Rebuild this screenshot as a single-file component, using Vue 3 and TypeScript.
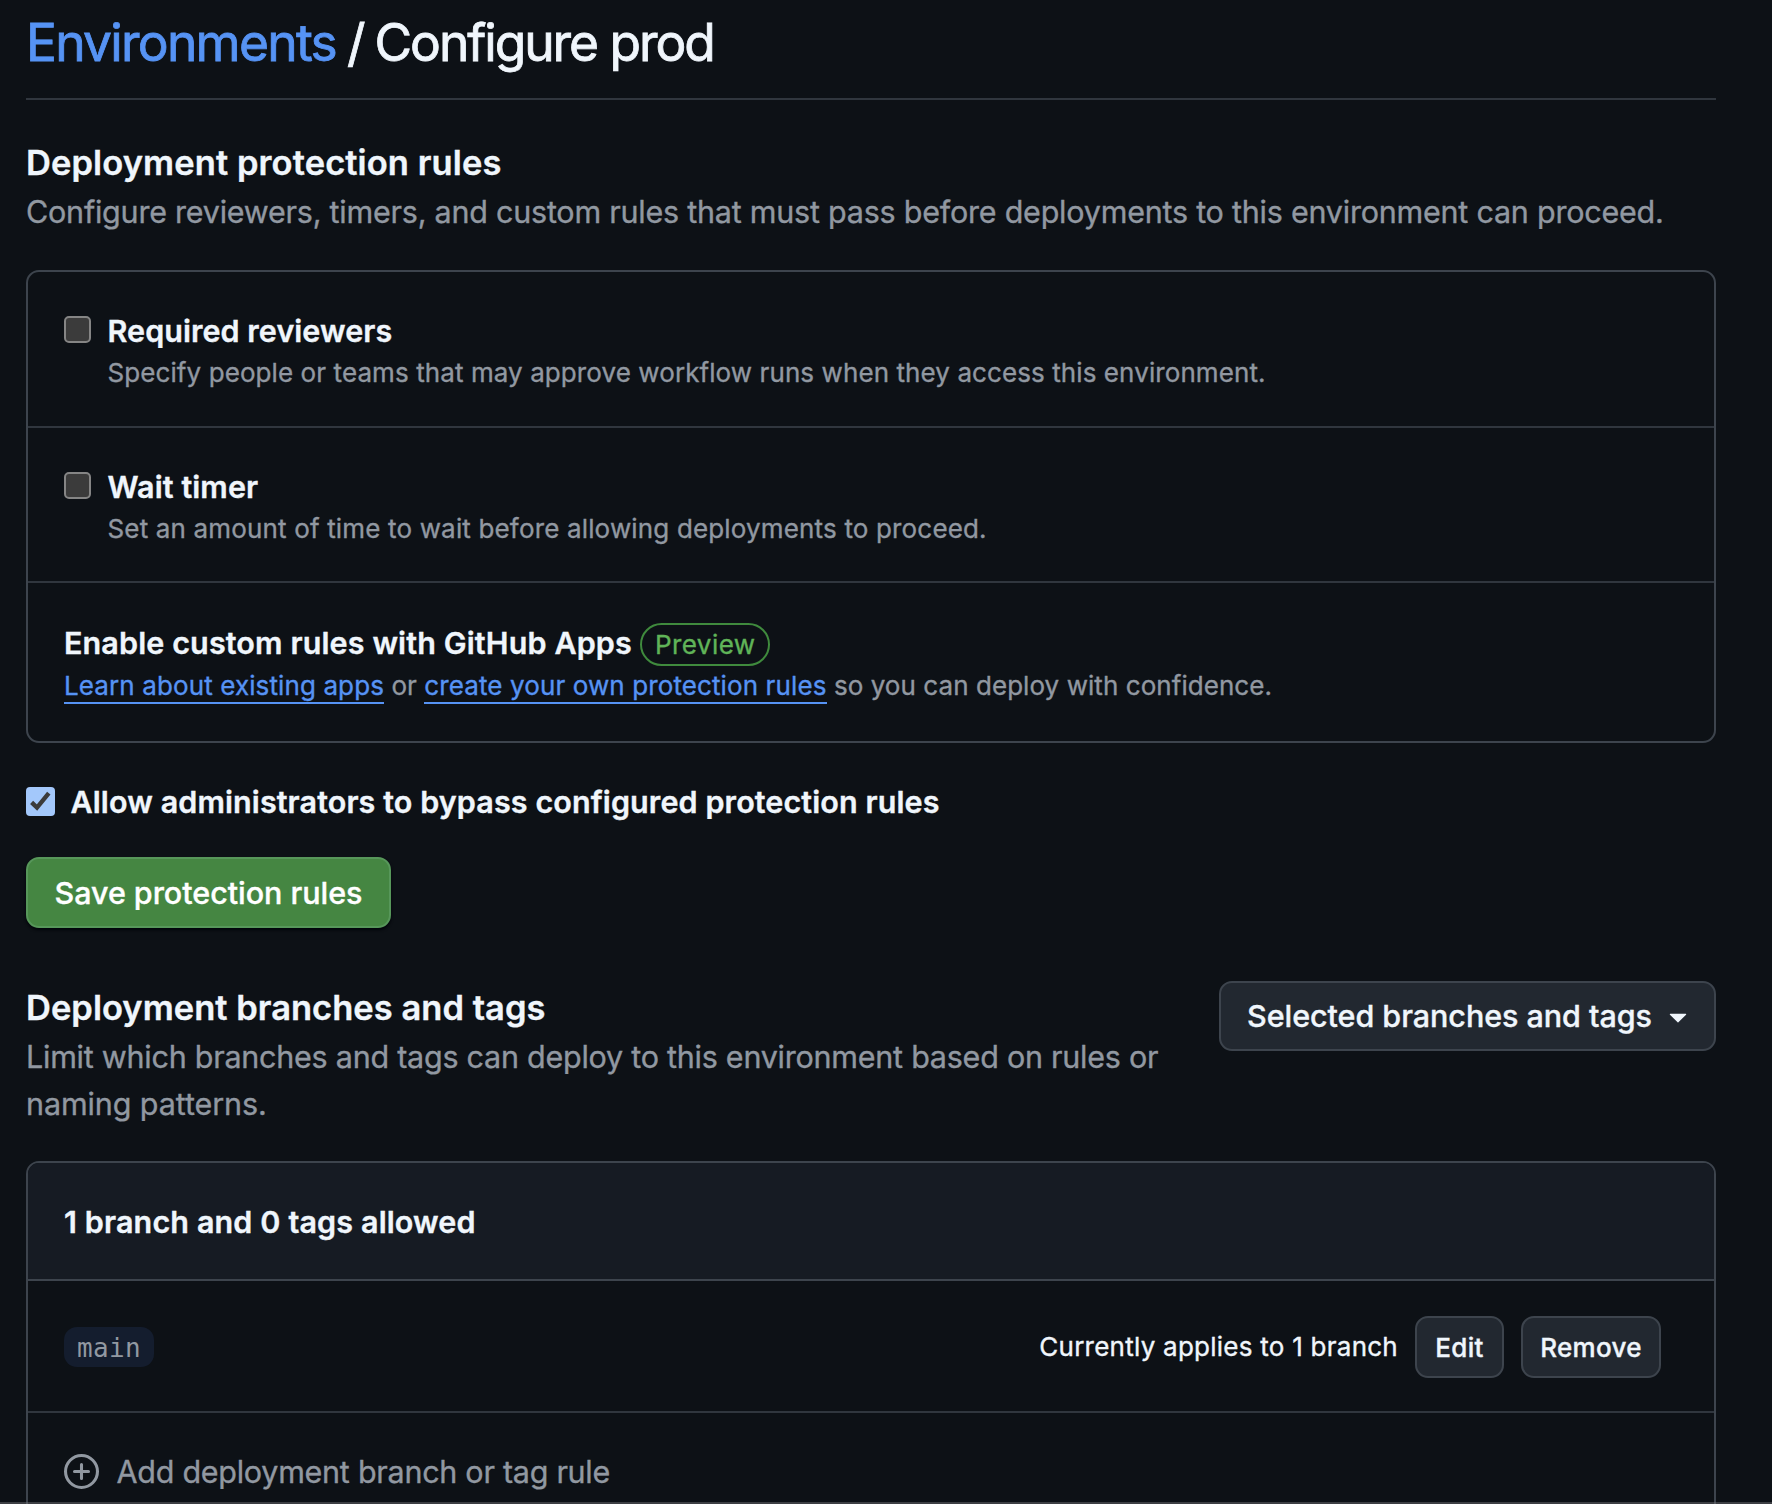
<script setup lang="ts">
import { ref } from 'vue'

interface Rule {
  id: string
  title: string
  description: string
  enabled: boolean
}

interface BranchPolicy {
  name: string
  summary: string
}

const rules = ref<Rule[]>([
  {
    id: 'reviewers',
    title: 'Required reviewers',
    description: 'Specify people or teams that may approve workflow runs when they access this environment.',
    enabled: false,
  },
  {
    id: 'timer',
    title: 'Wait timer',
    description: 'Set an amount of time to wait before allowing deployments to proceed.',
    enabled: false,
  },
])

const allowBypass = ref(true)

const policies: BranchPolicy[] = [{ name: 'main', summary: 'Currently applies to 1 branch' }]
</script>

<template>
  <main class="page">
    <h1 class="title">
      <a class="title-link" href="#">Environments</a><span class="slash">/</span><span class="title-name">Configure prod</span>
    </h1>

    <section class="protection">
      <h2 class="heading">Deployment protection rules</h2>
      <p class="lead">Configure reviewers, timers, and custom rules that must pass before deployments to this environment can proceed.</p>

      <div class="box">
        <div v-for="rule in rules" :key="rule.id" class="rule" :class="rule.id">
          <input v-model="rule.enabled" class="check" type="checkbox" :aria-label="rule.title" />
          <div>
            <div class="rule-title">{{ rule.title }}</div>
            <div class="note">{{ rule.description }}</div>
          </div>
        </div>
        <div class="rule custom">
          <div>
            <div class="rule-title with-badge">Enable custom rules with GitHub Apps<span class="badge">Preview</span></div>
            <div class="note custom-note">
              <a class="inline-link" href="#">Learn about existing apps</a> or
              <a class="inline-link" href="#">create your own protection rules</a> so you can deploy with confidence.
            </div>
          </div>
        </div>
      </div>

      <div class="bypass" @click="allowBypass = !allowBypass">
        <svg class="bypass-check" viewBox="0 0 29 29" width="29" height="29" aria-hidden="true">
          <rect width="29" height="29" rx="4" fill="#a3c8fb" />
          <path v-if="allowBypass" d="M5.6 15.4 11 20.6 22.8 6.2" fill="none" stroke="#3b3b3b" stroke-width="4.4" />
        </svg>
        <span class="rule-title">Allow administrators to bypass configured protection rules</span>
      </div>

      <button class="save" type="button">Save protection rules</button>
    </section>

    <section class="branches">
      <div class="branches-head">
        <div class="branches-text">
          <h2 class="heading second">Deployment branches and tags</h2>
          <p class="lead limit">Limit which branches and tags can deploy to this environment based on rules or<br /><span class="limit-end">naming patterns.</span></p>
        </div>
        <button class="select" type="button">
          <span class="select-label">Selected branches and tags</span>
          <svg class="caret" viewBox="0 0 16 16" width="36" height="36" fill="currentColor" aria-hidden="true">
            <path d="m4.427 7.427 3.396 3.396a.25.25 0 0 0 .354 0l3.396-3.396A.25.25 0 0 0 11.396 7H4.604a.25.25 0 0 0-.177.427Z" />
          </svg>
        </button>
      </div>

      <div class="box table">
        <div class="table-head">1 branch and 0 tags allowed</div>
        <div v-for="policy in policies" :key="policy.name" class="policy">
          <code class="branch">{{ policy.name }}</code>
          <span class="summary">{{ policy.summary }}</span>
          <button class="small edit" type="button">Edit</button>
          <button class="small remove" type="button">Remove</button>
        </div>
        <div class="add">
          <svg class="plus" viewBox="0 0 16 16" width="35" height="35" fill="none" stroke="currentColor" stroke-width="1.4" stroke-linecap="round" aria-hidden="true">
            <circle cx="8" cy="8" r="7.3" />
            <path d="M8 4.8v6.4M4.8 8h6.4" />
          </svg>
          <span>Add deployment branch or tag rule</span>
        </div>
      </div>
    </section>
    <div class="edge"></div>
  </main>
</template>

<style>
html,
body {
  background: #0d1116;
}
</style>

<style scoped>
.page {
  position: relative;
  box-sizing: border-box;
  width: 1772px;
  height: 1504px;
  padding: 0 56px 0 26px;
  overflow: hidden;
  background: #0d1116;
  color: #f0f6fc;
  font-family: Inter, "Liberation Sans", sans-serif;
  font-size: 30.5px;
  -webkit-text-stroke: 0.35px currentColor;
}
h1,
h2,
p {
  margin: 0;
}
a {
  color: #5693f4;
  text-decoration: none;
}
button {
  box-sizing: border-box;
  margin: 0;
  font-family: inherit;
  white-space: nowrap;
}
.title {
  display: flex;
  height: 98px;
  padding-top: 2px;
  box-sizing: border-box;
  box-shadow: 0 2px 0 #30363e;
  font-size: 51.5px;
  font-weight: 400;
  line-height: 80px;
  white-space: nowrap;
  -webkit-text-stroke-width: 0.8px;
}
.title-link {
  width: 321px;
  letter-spacing: -1.754px;
}
.slash {
  width: 27.5px;
}
.title-name {
  letter-spacing: -2.06px;
}
.heading {
  font-size: 34.5px;
  font-weight: 600;
  line-height: 48px;
  letter-spacing: 0.09px;
}
.protection > .heading {
  margin-top: 41px;
}
.heading.second {
  letter-spacing: 0.02px;
}
.lead {
  margin-top: 1px;
  color: #9198a1;
  line-height: 47px;
  letter-spacing: -0.229px;
  white-space: nowrap;
}
.box {
  border: 2px solid #3d444d;
  border-radius: 13px;
}
.protection .box {
  margin-top: 35px;
}
.rule {
  display: flex;
  box-sizing: border-box;
  padding: 36px 36px 0;
}
.rule.reviewers {
  height: 156px;
  border-bottom: 2px solid #30363e;
}
.rule.timer {
  height: 155px;
  border-bottom: 2px solid #30363e;
}
.rule.custom {
  height: 158px;
  padding-top: 37px;
}
.check {
  appearance: none;
  box-sizing: border-box;
  flex: none;
  width: 26.5px;
  height: 26.5px;
  margin: 8px 17px 0 0;
  border: 2px solid #858585;
  border-radius: 5px;
  background: #3b3b3b;
}
.rule-title {
  font-weight: 600;
  line-height: 46px;
  letter-spacing: 0.1px;
  white-space: nowrap;
}
.reviewers .rule-title {
  letter-spacing: 0.05px;
}
.note {
  color: #9198a1;
  font-size: 26px;
  line-height: 38px;
  letter-spacing: 0.087px;
  white-space: nowrap;
}
.timer .note {
  letter-spacing: 0.16px;
}
.custom-note {
  padding-top: 1px;
  letter-spacing: 0.06px;
}
.with-badge {
  display: flex;
}
.with-badge.rule-title {
  letter-spacing: 0.12px;
}
.badge {
  box-sizing: border-box;
  height: 43px;
  margin: 3px 0 0 8px;
  padding: 0 12.5px 0 13px;
  border: 2px solid #3f8a3d;
  border-radius: 22px;
  color: #60b458;
  font-size: 26px;
  font-weight: 400;
  line-height: 39px;
  letter-spacing: 0.45px;
}
.inline-link {
  padding-bottom: 1px;
  border-bottom: 2px solid #5693f4;
  letter-spacing: 0.11px;
}
.bypass {
  display: flex;
  gap: 15.5px;
  margin-top: 36px;
}
.bypass-check {
  flex: none;
  margin-top: 8px;
}
.save {
  display: block;
  width: 365px;
  height: 71px;
  margin-top: 32px;
  padding: 0;
  border: 2px solid #57975a;
  border-radius: 13px;
  background: #458642;
  box-shadow: 0 2px 3px #010409;
  color: #fff;
  font-size: 30.5px;
  font-weight: 500;
  line-height: 67px;
  letter-spacing: -0.04px;
}
.branches-head {
  display: flex;
  justify-content: space-between;
  align-items: flex-start;
  height: 146px;
  margin-top: 53px;
}
.branches-text {
  padding-top: 3px;
}
.limit {
  letter-spacing: -0.247px;
}
.limit-end {
  letter-spacing: -0.1px;
}
.select {
  display: flex;
  align-items: center;
  width: 497px;
  height: 70px;
  padding: 0 18px 0 26px;
  border: 2px solid #3d444d;
  border-radius: 13px;
  background: #222830;
  color: #f0f6fc;
  font-size: 30.5px;
  font-weight: 500;
  letter-spacing: -0.05px;
}
.select-label {
  padding-bottom: 2px;
}
.caret {
  flex: none;
  margin: 0 0 1px 8.5px;
}
.table {
  height: 400px;
  margin-top: 34px;
  overflow: hidden;
}
.table-head {
  height: 116px;
  padding-left: 36px;
  border-bottom: 2px solid #3d444d;
  background: #161b23;
  font-weight: 600;
  line-height: 118px;
  letter-spacing: 0.13px;
}
.policy {
  display: flex;
  align-items: center;
  height: 130px;
  padding: 0 53px 0 36px;
  border-bottom: 2px solid #30363e;
}
.branch {
  width: 90px;
  height: 40px;
  margin-top: 2px;
  border-radius: 13px;
  background: #141d2e;
  color: #9198a1;
  font-family: "DejaVu Sans Mono", "Liberation Mono", monospace;
  font-size: 26px;
  line-height: 42px;
  letter-spacing: 0.3px;
  text-align: center;
  -webkit-text-stroke-width: 0;
}
.summary {
  margin-left: auto;
  font-size: 26px;
  letter-spacing: 0.25px;
}
.small {
  height: 62px;
  margin-top: 2px;
  padding: 0;
  border: 2px solid #3d444d;
  border-radius: 13px;
  background: #222830;
  color: #f0f6fc;
  font-size: 26px;
  font-weight: 500;
  letter-spacing: 0.3px;
}
.edit {
  width: 89px;
  margin-left: 17px;
}
.remove {
  width: 140px;
  margin-left: 17px;
}
.add {
  display: flex;
  gap: 17.5px;
  padding: 36px 36px 0;
  color: #9198a1;
  line-height: 46px;
  letter-spacing: -0.267px;
}
.plus {
  flex: none;
  margin-top: 5px;
}
/* Translucent divider lying over the bottom of the page, box borders included. */
.edge {
  position: absolute;
  right: 0;
  bottom: 0;
  left: 0;
  height: 2px;
  background: rgba(120, 120, 124, 0.45);
}
</style>
